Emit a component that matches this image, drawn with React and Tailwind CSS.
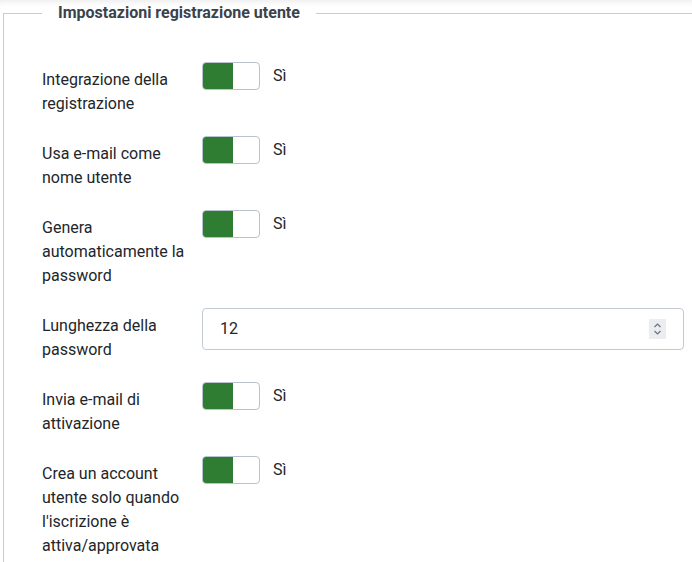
import React from 'react';

const rows = [
  { label: 'Integrazione della registrazione', type: 'switch' },
  { label: 'Usa e-mail come nome utente', type: 'switch' },
  { label: 'Genera automaticamente la password', type: 'switch' },
  { label: 'Lunghezza della password', type: 'number', value: '12' },
  { label: 'Invia e-mail di attivazione', type: 'switch' },
  { label: "Crea un account utente solo quando l'iscrizione è attiva/approvata", type: 'switch' },
];

const Switcher = () => (
  <div className="flex items-start gap-[13px]">
    <div className="flex h-[28px] w-[58px] overflow-hidden rounded-[4px] border border-[#b9c2cd] bg-white">
      <div className="h-full w-[30px] bg-[#2e7d32]" />
    </div>
    <span className="pt-[2px] leading-[24px]">Sì</span>
  </div>
);

const NumberField = ({ value }) => (
  <div className="flex h-[42px] flex-1 items-center justify-between rounded-[4px] border border-[#c3cad3] bg-white pl-[17px] pr-[17px]">
    <span className="text-[16px]">{value}</span>
    <div className="flex h-[20px] w-[17px] flex-col items-center justify-center bg-[#ebedf0]">
      <svg width="9" height="14" viewBox="0 0 9 14" fill="none" stroke="#6b7280" strokeWidth="1.2">
        <path d="M1.5 5 L4.5 2 L7.5 5" />
        <path d="M1.5 9 L4.5 12 L7.5 9" />
      </svg>
    </div>
  </div>
);

export default function App() {
  return (
    <div
      className="h-[562px] w-[692px] overflow-hidden bg-white text-[16px] text-[#22262a] shadow-[inset_0_6px_6px_-4px_rgba(0,0,0,0.08)]"
      style={{ fontFamily: 'Roboto, "Noto Sans", sans-serif' }}
    >
      <fieldset className="ml-[3px] mt-[2px] border border-r-0 border-[#c5ccd6] pb-10 pl-[38px] pr-[8px]">
        <legend className="px-4 text-[16px] font-bold leading-[22px] text-[#3b424b]">
          Impostazioni registrazione utente
        </legend>
        <div className="pt-[38px]">
          {rows.map((row) => (
            <div key={row.label} className="mb-[20px] flex items-start gap-[10px]">
              <label className="w-[150px] shrink-0 pt-[6px] leading-[24px]">{row.label}</label>
              {row.type === 'switch' ? <Switcher /> : <NumberField value={row.value} />}
            </div>
          ))}
        </div>
      </fieldset>
    </div>
  );
}
